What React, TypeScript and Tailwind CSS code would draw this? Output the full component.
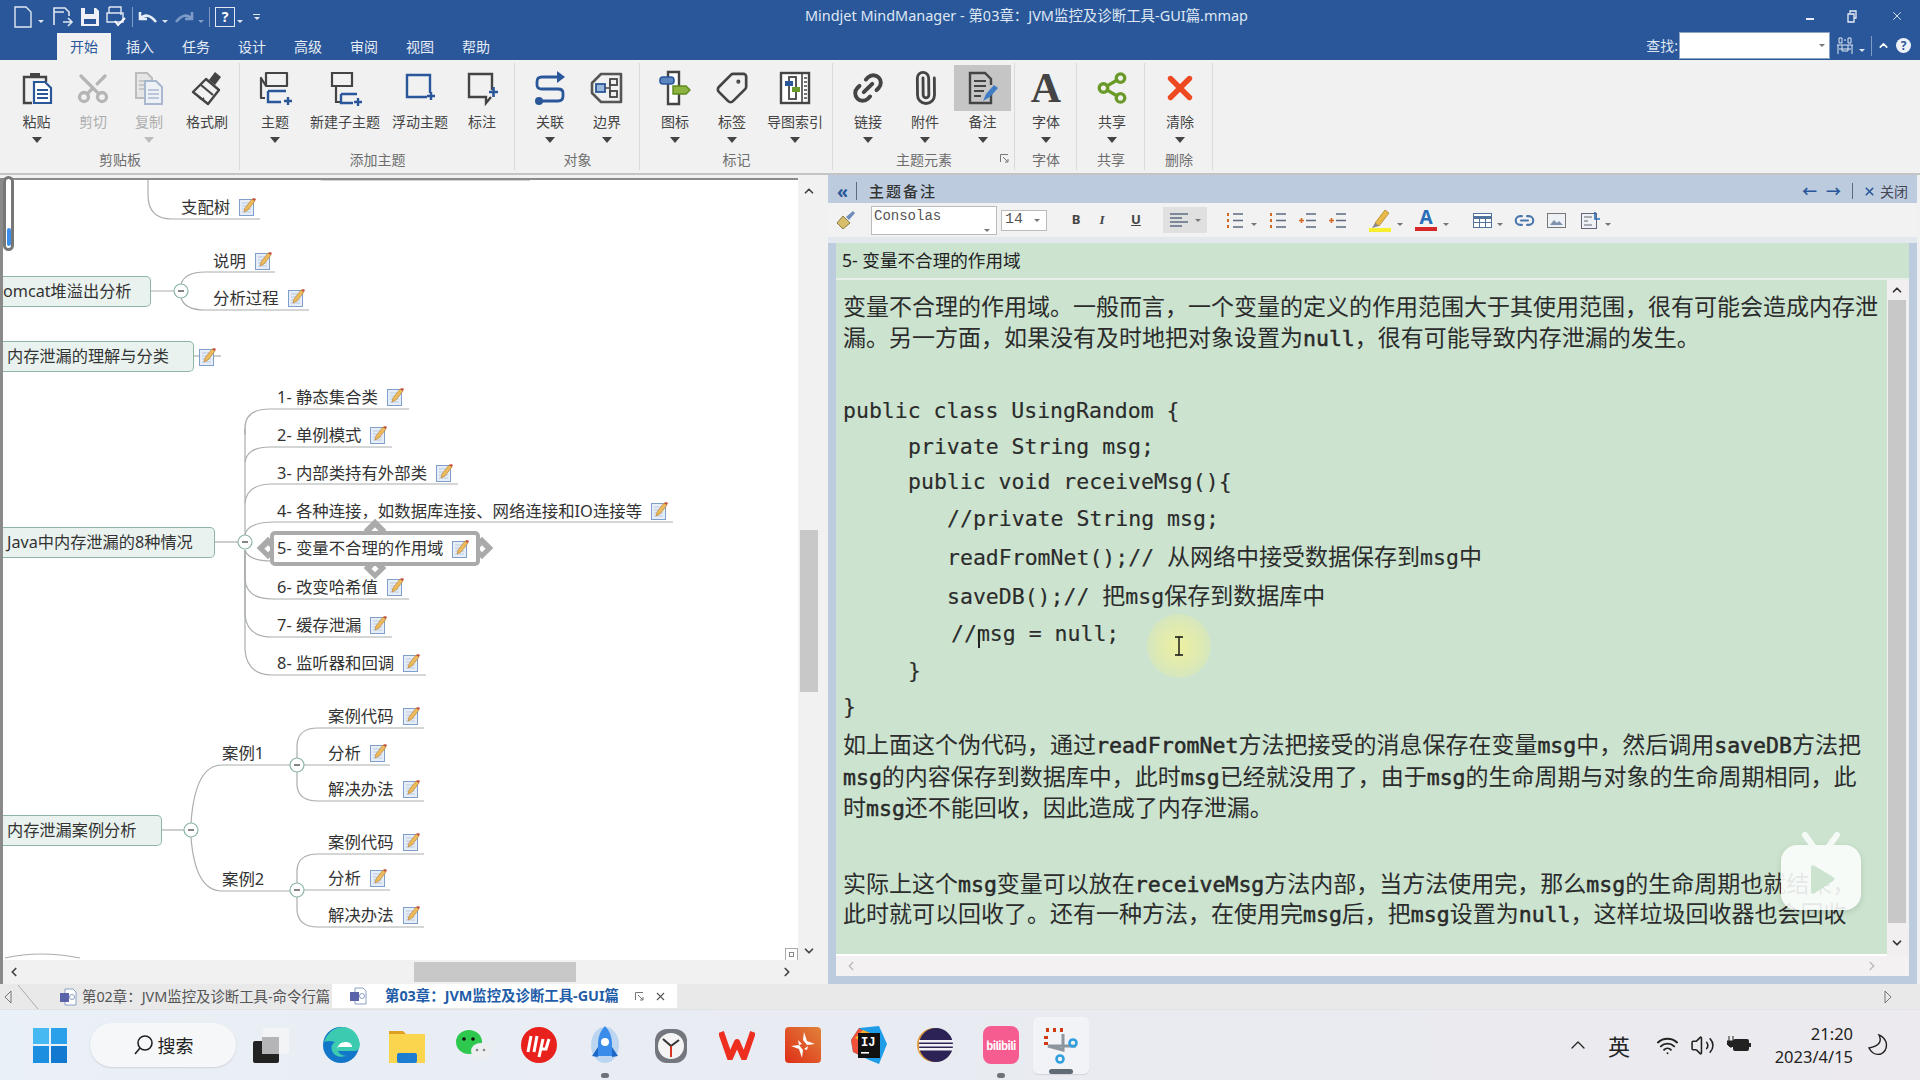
import { ChevronDown, ChevronLeft, ChevronRight, ChevronUp, Link2, Paperclip, Scissors, Share2, Tag, Volume2, Wifi, X } from "lucide-react";
import type { ReactNode } from "react";

const Caret = ({ dim = false }: { dim?: boolean }) => (
  <span className={`block w-0 h-0 border-x-[5.5px] border-x-transparent border-t-[6px] ${dim ? "border-t-[#bdbdbd]" : "border-t-[#444]"}`} />
);

const MiniCaret = ({ white = false }: { white?: boolean }) => (
  <span className={`inline-block w-0 h-0 border-x-[3px] border-x-transparent border-t-[3.5px] ${white ? "border-t-[#dfe7f2]" : "border-t-[#777]"}`} />
);

const Clipboard = () => (
  <svg width="34" height="36" viewBox="0 0 34 36" fill="none">
    <path d="M10 3h10v4H10z" fill="#444" />
    <path d="M12 33H4V7h22v5" stroke="#444" strokeWidth="2.4" />
    <path d="M14 12h11l6 6v15H14z" fill="#fff" stroke="#2a579a" strokeWidth="2.2" />
    <path d="M17 20h11M17 24h11M17 28h11" stroke="#2a579a" strokeWidth="1.8" />
  </svg>
);
const CopyDocs = () => (
  <svg width="34" height="36" viewBox="0 0 34 36" fill="none">
    <path d="M4 3h11l5 5v20H4z" fill="#e6e6e6" stroke="#bdbdbd" strokeWidth="2" />
    <path d="M7 11h9M7 15h9M7 19h9" stroke="#bdbdbd" strokeWidth="1.6" />
    <path d="M13 11h11l6 6v17H13z" fill="#eef1f6" stroke="#a9b8cf" strokeWidth="2" />
    <path d="M16 20h11M16 24h11M16 28h11" stroke="#a9b8cf" strokeWidth="1.6" />
  </svg>
);
const FormatBrush = () => (
  <svg width="34" height="36" viewBox="0 0 34 36" fill="none">
    <path d="M25 2l6 5-6 8-6-5z" fill="#444" />
    <path d="M16 9l13 11-11 14L3 22z" stroke="#444" strokeWidth="2.4" strokeLinejoin="round" />
    <path d="M11 15l12 10" stroke="#444" strokeWidth="2.2" />
    <path d="M8 26l3 3M12 30l2-2" stroke="#444" strokeWidth="1.8" />
  </svg>
);
const TopicIcon = () => (
  <svg width="34" height="36" viewBox="0 0 34 36" fill="none">
    <path d="M8 3h21v13H8zM8 16 3 8v20h4" stroke="#444" strokeWidth="2.2" strokeLinejoin="round" />
    <path d="M10 21h18M10 21v11h13" stroke="#2a579a" strokeWidth="2.4" />
    <path d="M26 31h8M30 27v8" stroke="#2a579a" strokeWidth="2.4" />
  </svg>
);
const SubTopicIcon = () => (
  <svg width="34" height="36" viewBox="0 0 34 36" fill="none">
    <path d="M4 3h20v13H4zM8 16v16h4" stroke="#444" strokeWidth="2.2" />
    <path d="M13 24h16M13 24v9h12" stroke="#2a579a" strokeWidth="2.4" />
    <path d="M26 32h8M30 28v8" stroke="#2a579a" strokeWidth="2.4" />
  </svg>
);
const FloatIcon = () => (
  <svg width="34" height="36" viewBox="0 0 34 36" fill="none">
    <path d="M27 23V5H4v22h20" stroke="#2a579a" strokeWidth="2.4" />
    <path d="M24 26h8M28 22v8" stroke="#2a579a" strokeWidth="2.4" />
  </svg>
);
const CalloutIcon = () => (
  <svg width="34" height="36" viewBox="0 0 34 36" fill="none">
    <path d="M27 20V4H4v23h17v6l5-6" stroke="#444" strokeWidth="2.4" />
    <path d="M24 22h9M28.5 17v10" stroke="#2a579a" strokeWidth="2.6" />
  </svg>
);
const RelationIcon = () => (
  <svg width="34" height="36" viewBox="0 0 34 36" fill="none">
    <path d="M28 7H9Q4 7 4 12v3q0 4 5 4h16q5 0 5 4v3q0 5-5 5H8" stroke="#2a579a" strokeWidth="2.8" />
    <path d="M24 1l8 6-8 6z" fill="#2a579a" />
    <circle cx="6" cy="31" r="4" fill="#2a579a" />
  </svg>
);
const BoundaryIcon = () => (
  <svg width="34" height="36" viewBox="0 0 34 36" fill="none">
    <path d="M11 4h20v28H11L2 23V13z" stroke="#555" strokeWidth="2.6" strokeLinejoin="round" />
    <rect x="6" y="14" width="9" height="8" fill="#9ab7da" stroke="#2a579a" strokeWidth="1.8" />
    <rect x="20" y="9" width="7" height="6" stroke="#444" strokeWidth="1.8" />
    <rect x="20" y="21" width="7" height="6" stroke="#444" strokeWidth="1.8" />
    <path d="M15 18h5M20 12v12" stroke="#444" strokeWidth="1.6" />
  </svg>
);
const MarkerIcon = () => (
  <svg width="34" height="36" viewBox="0 0 34 36" fill="none">
    <path d="M10 2h11v32H10z" fill="#fff" stroke="#444" strokeWidth="2.4" />
    <rect x="2" y="7" width="14" height="7" rx="3" fill="#5d86c0" stroke="#2a579a" strokeWidth="1.6" />
    <path d="M15 16h13l4 4-4 4H15z" fill="#8cb23f" stroke="#5e8a1f" strokeWidth="1.4" />
  </svg>
);
const MapIndexIcon = () => (
  <svg width="34" height="36" viewBox="0 0 34 36" fill="none">
    <rect x="3" y="3" width="28" height="30" fill="#fff" stroke="#444" strokeWidth="2.4" />
    <path d="M24 4v28" stroke="#444" strokeWidth="1.6" />
    <path d="M26 8h3M26 12h3M26 16h3M26 20h3M26 24h3M26 28h3" stroke="#444" strokeWidth="1.6" />
    <rect x="11" y="7" width="7" height="22" stroke="#444" strokeWidth="1.8" />
    <rect x="7" y="11" width="8" height="5" fill="#2a579a" />
    <path d="M14 17h8v5h-8z" fill="#6a9a2a" />
  </svg>
);
const NoteIcon = () => (
  <svg width="34" height="36" viewBox="0 0 34 36" fill="none">
    <path d="M25 24v9H4V3h15l6 6v6" stroke="#444" strokeWidth="2.4" />
    <path d="M8 11h12M8 16h12M8 21h10M8 26h7" stroke="#444" strokeWidth="2" />
    <path d="M17 31l3-7 8-9 4 3-8 9z" fill="#3f7cc4" />
  </svg>
);

type RibbonButton = { label: string; icon: ReactNode; w: string; caret?: boolean; dim?: boolean; active?: boolean };

const groups: { title: string; w: string; pad: string; items: RibbonButton[]; launcher?: boolean }[] = [
  {
    title: "剪贴板",
    w: "w-[240px]",
    pad: "pl-[8px]",
    items: [
      { label: "粘贴", icon: <Clipboard />, w: "w-[57px]", caret: true },
      { label: "剪切", icon: <Scissors size={36} strokeWidth={2.2} className="text-[#b5b5b5] -rotate-90" />, w: "w-[56px]", dim: true },
      { label: "复制", icon: <CopyDocs />, w: "w-[56px]", caret: true, dim: true },
      { label: "格式刷", icon: <FormatBrush />, w: "w-[60px]" },
    ],
  },
  {
    title: "添加主题",
    w: "w-[275px]",
    pad: "pl-[8px]",
    items: [
      { label: "主题", icon: <TopicIcon />, w: "w-[54px]", caret: true },
      { label: "新建子主题", icon: <SubTopicIcon />, w: "w-[86px]" },
      { label: "浮动主题", icon: <FloatIcon />, w: "w-[64px]" },
      { label: "标注", icon: <CalloutIcon />, w: "w-[60px]" },
    ],
  },
  {
    title: "对象",
    w: "w-[125px]",
    pad: "pl-[7px]",
    items: [
      { label: "关联", icon: <RelationIcon />, w: "w-[56px]", caret: true },
      { label: "边界", icon: <BoundaryIcon />, w: "w-[58px]", caret: true },
    ],
  },
  {
    title: "标记",
    w: "w-[193px]",
    pad: "pl-[7px]",
    items: [
      { label: "图标", icon: <MarkerIcon />, w: "w-[56px]", caret: true },
      { label: "标签", icon: <Tag size={34} strokeWidth={1.9} className="text-[#444] rotate-90" />, w: "w-[58px]", caret: true },
      { label: "导图索引", icon: <MapIndexIcon />, w: "w-[68px]", caret: true },
    ],
  },
  {
    title: "主题元素",
    w: "w-[182px]",
    pad: "pl-[7px]",
    launcher: true,
    items: [
      { label: "链接", icon: <Link2 size={36} strokeWidth={2.6} className="text-[#444] -rotate-45" />, w: "w-[56px]", caret: true },
      { label: "附件", icon: <Paperclip size={34} strokeWidth={2} className="text-[#444] -rotate-45" />, w: "w-[58px]", caret: true },
      { label: "备注", icon: <NoteIcon />, w: "w-[57px]", caret: true, active: true },
    ],
  },
  {
    title: "字体",
    w: "w-[62px]",
    pad: "pl-[3px]",
    items: [
      {
        label: "字体",
        icon: <span className="font-['Liberation_Serif',serif] font-bold text-[42px] leading-[36px] text-[#444]">A</span>,
        w: "w-[56px]",
        caret: true,
      },
    ],
  },
  {
    title: "共享",
    w: "w-[68px]",
    pad: "pl-[7px]",
    items: [{ label: "共享", icon: <Share2 size={34} strokeWidth={2.4} className="text-[#6a9a2a]" />, w: "w-[56px]", caret: true }],
  },
  {
    title: "删除",
    w: "w-[68px]",
    pad: "pl-[7px]",
    items: [{ label: "清除", icon: <X size={38} strokeWidth={3.4} className="text-[#ee4a22]" />, w: "w-[56px]", caret: true }],
  },
];

const tabs = ["插入", "任务", "设计", "高级", "审阅", "视图", "帮助"];

const TitleBar = () => (
  <header className="relative h-[60px] shrink-0 bg-[#2a579a] text-white">
    <div className="flex h-[33px] items-center pl-[14px]">
      <svg width="18" height="22" viewBox="0 0 18 22" fill="none"><path d="M1 1h11l5 5v15H1z" stroke="#dfe7f2" strokeWidth="1.4" /></svg>
      <span className="ml-[6px] mr-[9px]"><MiniCaret white /></span>
      <svg width="21" height="20" viewBox="0 0 21 20" fill="none"><path d="M1 18V1h11l4 4v4M1 5h10M10 15h9M15 11l4 4-4 4" stroke="#dfe7f2" strokeWidth="1.6" /></svg>
      <svg className="ml-[6px]" width="20" height="20" viewBox="0 0 20 20"><path d="M1 1h15l3 3v15H1z" fill="#eef2f8" /><path d="M5 1h9v6H5z" fill="#2a579a" /><path d="M4 12h12v5H4z" fill="#2a579a" /></svg>
      <svg className="ml-[6px]" width="21" height="21" viewBox="0 0 21 21" fill="none"><path d="M3 1h12v8M3 1v6M1 7h16v9H1z" stroke="#dfe7f2" strokeWidth="1.4" /><path d="M9 15l3 4 7-7" stroke="#fff" strokeWidth="2" /></svg>
      <span className="ml-[5px] mr-[5px] h-[20px] w-px bg-[#7f9cc6]" />
      <svg width="20" height="14" viewBox="0 0 20 14" fill="none"><path d="M2 2v7h7M2 9q7-8 16 3" stroke="#e8eef7" strokeWidth="2.6" /></svg>
      <span className="ml-[4px] mr-[6px]"><MiniCaret white /></span>
      <svg width="20" height="14" viewBox="0 0 20 14" fill="none"><path d="M18 2v7h-7M18 9Q11 1 2 12" stroke="#7d9bc6" strokeWidth="2.6" /></svg>
      <span className="ml-[4px] mr-[5px] opacity-50"><MiniCaret white /></span>
      <span className="mr-[5px] h-[20px] w-px bg-[#7f9cc6]" />
      <span className="flex h-[20px] w-[20px] items-center justify-center border border-[#dfe7f2] text-[14px] font-bold leading-none">?</span>
      <span className="ml-[2px]"><MiniCaret white /></span>
      <span className="ml-[10px] flex flex-col items-center gap-[2px]"><span className="h-px w-[7px] bg-[#dfe7f2]" /><MiniCaret white /></span>
    </div>
    <div className="flex h-[27px] pl-[57px] text-[14px] leading-[27px] text-[#e6edf6]">
      <span className="w-[54px] bg-[#f1f1f1] text-center text-[#2a579a]">开始</span>
      {tabs.map((t) => (
        <span key={t} className="ml-[2px] w-[54px] text-center">{t}</span>
      ))}
    </div>
    <div className="absolute left-[805px] top-[5px] whitespace-pre text-[14.45px] leading-[22px] text-[#dfe8f4]">Mindjet MindManager - 第03章：JVM监控及诊断工具-GUI篇.mmap</div>
    <div className="absolute right-[16px] top-[9px] flex items-center gap-[33px]">
      <span className="mt-[6px] h-[2px] w-[8px] bg-[#e8eef7]" />
      <svg width="10" height="13" viewBox="0 0 10 13" fill="none"><path d="M3 3V1h6v7H7M1 4h6v8H1z" stroke="#e8eef7" strokeWidth="1.3" /></svg>
      <X size={14} strokeWidth={1.5} className="text-[#e8eef7]" />
    </div>
    <div className="absolute right-0 top-[32px] flex h-[27px] items-center pr-[9px]">
      <span className="mr-px text-[14px] text-[#dce5f1]">查找:</span>
      <span className="mr-[6px] flex h-[27px] w-[151px] items-center justify-end border border-[#8ba4c8] bg-white pr-[4px]"><MiniCaret /></span>
      <svg width="18" height="18" viewBox="0 0 18 18" fill="none" stroke="#dfe7f2" strokeWidth="1"><path d="M3 1h3v5H3zM12 1h3v5h-3zM1 8h16M2 8v9M16 8v9M6 8v6h6V8M3 12h12M8 3h2" /></svg>
      <span className="ml-[5px]"><MiniCaret white /></span>
      <span className="ml-[6px] h-[20px] w-px bg-[#7f9cc6]" />
      <ChevronUp size={13} strokeWidth={3} className="ml-[5px] text-white" />
      <span className="ml-[6px] flex h-[15px] w-[15px] items-center justify-center rounded-full bg-[#eef2f8] text-[12px] font-bold leading-none text-[#2a579a]">?</span>
    </div>
  </header>
);

const Ribbon = () => (
  <div className="flex h-[115px] shrink-0 border-b-2 border-[#c4c4c4] bg-[#f1f1f1]">
    {groups.map((g) => (
      <section key={g.title} className={`relative ${g.w} shrink-0`}>
        <div className={`flex h-[89px] ${g.pad}`}>
          {g.items.map((b) => (
            <div key={b.label} className={`flex ${b.w} flex-col items-center pt-[5px]`}>
              <div className={`flex h-[46px] w-full items-center justify-center ${b.active ? "bg-[#c6c5c6]" : ""}`}>{b.icon}</div>
              <div className={`mt-px whitespace-nowrap text-[14px] leading-[20px] ${b.dim ? "text-[#aeaeae]" : "text-[#444]"}`}>{b.label}</div>
              {b.caret && <div className="mt-[5px]"><Caret dim={b.dim} /></div>}
            </div>
          ))}
        </div>
        <div className="text-center text-[14px] leading-[22px] text-[#6e6e6e]">{g.title}</div>
        {g.launcher && (
          <svg className="absolute bottom-[10px] right-[6px]" width="9" height="9" viewBox="0 0 9 9" fill="none" stroke="#777"><path d="M.5 8V.5H8M3 3l5 5M8 5v3H5" /></svg>
        )}
        <span className="absolute bottom-[3px] right-0 top-[3px] w-px bg-[#dadada]" />
      </section>
    ))}
    <div className="ml-auto" />
  </div>
);

const NoteMark = () => (
  <svg width="17" height="18" viewBox="0 0 17 18" className="shrink-0">
    <rect x="0.5" y="1.5" width="14" height="16" fill="#e7edf6" stroke="#7f9fcd" />
    <path d="M3 5h9M3 8h9M3 11h9M3 14h9" stroke="#b9c9e0" />
    <path d="M5 14l1-4 7-9 3 2-7 9z" fill="#edbb5e" stroke="#b27a25" strokeWidth="0.6" />
    <path d="M13 1l3 2 1-2-2-1z" fill="#c4503c" />
  </svg>
);

// Places on the free canvas of the map: offsets are counted from the canvas corner.
const topics: { text: string; pos: string }[] = [
  { text: "支配树", pos: "left-[181px] top-[20px]" },
  { text: "说明", pos: "left-[213px] top-[74px]" },
  { text: "分析过程", pos: "left-[213px] top-[111px]" },
  { text: "1- 静态集合类", pos: "left-[277px] top-[210px]" },
  { text: "2- 单例模式", pos: "left-[277px] top-[248px]" },
  { text: "3- 内部类持有外部类", pos: "left-[277px] top-[286px]" },
  { text: "4- 各种连接，如数据库连接、网络连接和IO连接等", pos: "left-[277px] top-[324px]" },
  { text: "6- 改变哈希值", pos: "left-[277px] top-[400px]" },
  { text: "7- 缓存泄漏", pos: "left-[277px] top-[438px]" },
  { text: "8- 监听器和回调", pos: "left-[277px] top-[476px]" },
  { text: "案例代码", pos: "left-[328px] top-[529px]" },
  { text: "分析", pos: "left-[328px] top-[566px]" },
  { text: "解决办法", pos: "left-[328px] top-[602px]" },
  { text: "案例代码", pos: "left-[328px] top-[655px]" },
  { text: "分析", pos: "left-[328px] top-[691px]" },
  { text: "解决办法", pos: "left-[328px] top-[728px]" },
];

const branches = [
  "M148 175V195Q148 219 172 219H260",
  "M310 175Q316 180 326 180H530",
  "M150 291H174M181 284Q185 272 205 272H275M181 298Q185 310 205 310H309",
  "M193 356H221",
  "M214 542H238",
  "M245 435V428Q245 409 270 409H409",
  "M245 462Q247 447 270 447H392",
  "M245 503Q247 484 272 484H458",
  "M245 535Q247 522 275 522H673",
  "M245 550Q248 561 272 561",
  "M245 550V580Q247 599 272 599H409",
  "M245 550V615Q247 637 272 637H392",
  "M245 550V650Q247 675 272 675H426",
  "M245 428V535",
  "M297 758V745Q298 728 318 728H424",
  "M304 765H390",
  "M297 772V785Q298 801 318 801H424",
  "M161 830H184",
  "M191 823Q195 765 222 765H290",
  "M191 837Q195 891 222 891H290",
  "M297 883V870Q298 854 318 854H424",
  "M304 890H390",
  "M297 897V910Q298 927 318 927H424",
  "M5 958Q40 950 80 958",
];

const circles = [[181, 291], [245, 542], [297, 765], [191, 830], [297, 890]];

const Root = ({ pos, children }: { pos: string; children: string }) => (
  <div className={`absolute ${pos} flex h-[31px] items-center overflow-hidden whitespace-pre rounded-r-[5px] border border-l-0 border-[#8db5a4] bg-[#e9f2ee] text-[16.2px] text-[#333]`}>{children}</div>
);

const Handle = ({ pos }: { pos: string }) => (
  <span className={`absolute ${pos} flex h-[16px] w-[16px] rotate-45 items-center justify-center bg-[#aaa]`}>
    <span className="h-[5px] w-[5px] bg-white" />
  </span>
);

const MindMap = () => (
  <div className="relative flex-1 overflow-hidden border-l-[3px] border-t-2 border-[#8a8a8a] bg-white">
    <div className="absolute -left-[3px] -top-[5px] h-[785px] w-[798px]">
      <svg className="absolute inset-0" width="798" height="785" viewBox="0 175 798 785" fill="none" stroke="#a9aeab" strokeWidth="1.2">
        {branches.map((d) => <path key={d} d={d} />)}
        {circles.map(([x, y]) => (
          <g key={`${x}-${y}`}>
            <circle cx={x} cy={y} r="7" fill="#fff" stroke="#8db5a4" />
            <path d={`M${x - 3} ${y}h6`} stroke="#333" />
          </g>
        ))}
      </svg>
      {topics.map((t) => (
        <div key={t.pos} className={`absolute ${t.pos} flex h-[24px] items-center gap-[9px] whitespace-pre text-[16.4px] text-[#333]`}>
          {t.text}
          <NoteMark />
        </div>
      ))}
      <div className="absolute left-[222px] top-[566px] flex h-[24px] items-center text-[16.4px] text-[#333]">案例1</div>
      <div className="absolute left-[222px] top-[692px] flex h-[24px] items-center text-[16.4px] text-[#333]">案例2</div>
      <Root pos="left-[3px] top-[101px] w-[148px]">omcat堆溢出分析</Root>
      <Root pos="left-[3px] top-[166px] w-[191px] pl-[4px]">内存泄漏的理解与分类</Root>
      <Root pos="left-[3px] top-[352px] w-[212px] pl-[4px]">Java中内存泄漏的8种情况</Root>
      <Root pos="left-[3px] top-[640px] w-[159px] pl-[4px]">内存泄漏案例分析</Root>
      <div className="absolute left-[199px] top-[173px]"><NoteMark /></div>
      <Handle pos="left-[367px] top-[347px]" />
      <Handle pos="left-[367px] top-[385px]" />
      <Handle pos="left-[260px] top-[365px]" />
      <Handle pos="left-[474px] top-[365px]" />
      <div className="absolute left-[270px] top-[356px] flex h-[35px] w-[210px] items-center gap-[9px] whitespace-pre rounded-[5px] border-[4px] border-[#aaa] bg-white pl-[3px] text-[16.4px] text-[#333]">
        5- 变量不合理的作用域
        <NoteMark />
      </div>
      <div className="absolute left-[785px] top-[773px] flex h-[13px] w-[13px] items-center justify-center border border-[#aaa]"><span className="h-[5px] w-[5px] border border-[#888]" /></div>
    </div>
  </div>
);

const LeftPane = () => (
  <div className="relative flex w-[820px] shrink-0 flex-col bg-[#f1f1f1] pt-[3px]">
    <div className="flex h-[782px]">
      <MindMap />
      <div className="flex w-[22px] shrink-0 flex-col items-center bg-[#f1f1f1] pt-[6px]">
        <ChevronUp size={14} strokeWidth={3} className="text-[#444]" />
        <div className="mt-[332px] h-[162px] w-[18px] bg-[#c8c8c8]" />
        <ChevronDown size={14} strokeWidth={3} className="mt-[252px] text-[#444]" />
      </div>
    </div>
    <div className="flex h-[24px] items-center border-l-[3px] border-[#8a8a8a] pl-[4px]">
      <ChevronLeft size={14} strokeWidth={3} className="text-[#444]" />
      <div className="ml-[393px] h-[20px] w-[162px] bg-[#c8c8c8]" />
      <ChevronRight size={14} strokeWidth={3} className="ml-[204px] text-[#444]" />
    </div>
    {/* pen tool of the recording, lies over the map */}
    <div className="absolute left-[3px] top-[1px] flex h-[75px] w-[11px] items-end rounded-[6px] border-[3px] border-[#777] bg-white pb-[2px]">
      <span className="mx-auto h-[18px] w-[4px] rounded-full bg-[#3d8fee]" />
    </div>
  </div>
);

const Sep = () => <span className="h-[27px] w-px bg-[#d6d6d6]" />;

const ListIcon = ({ accent, plus }: { accent: string; plus?: boolean }) => (
  <svg width="18" height="17" viewBox="0 0 18 17" fill="none">
    <path d="M7 2h10M7 8.5h10M7 15h10" stroke="#5c6b80" strokeWidth="1.6" />
    {plus ? <path d="M0 8.5h5M2.5 6v5" stroke={accent} strokeWidth="1.6" /> : <path d="M2 1v3M2 7v3M2 13v3" stroke={accent} strokeWidth="2" />}
  </svg>
);

const NoteToolbar = () => (
  <div className="flex h-[34px] shrink-0 items-center bg-[#f2f2f2] pl-[8px] text-[#444]">
    <svg width="20" height="20" viewBox="0 0 20 20"><path d="M1 13l6-7 7 7-7 6z" fill="#d8bd6a" stroke="#8a7b45" /><path d="M10 7l7-6 2 2-6 7z" fill="#6d8cbb" /></svg>
    <span className="ml-[15px]"><Sep /></span>
    <div className="flex h-[29px] w-[126px] justify-between border border-[#bbb] bg-white pl-[2px] pr-[6px] font-['Liberation_Mono',monospace] text-[14px] leading-[18px] text-[#555]">
      Consolas
      <span className="mt-[12px]"><MiniCaret /></span>
    </div>
    <div className="ml-[4px] flex h-[21px] w-[46px] items-center justify-between border border-[#bbb] bg-white px-[3px] pr-[6px] font-['Liberation_Mono',monospace] text-[15px] text-[#555]">
      14
      <MiniCaret />
    </div>
    <span className="ml-[7px]"><Sep /></span>
    <b className="ml-[17px] w-[10px] text-center text-[13px]">B</b>
    <i className="ml-[16px] w-[10px] text-center font-['Liberation_Serif',serif] text-[13px] font-bold">I</i>
    <u className="ml-[24px] w-[10px] text-center text-[13px] font-bold">U</u>
    <span className="ml-[17px]"><Sep /></span>
    <div className="ml-[5px] flex h-[26px] w-[44px] items-center gap-[5px] bg-[#e0e0e0] pl-[7px]">
      <svg width="20" height="14" viewBox="0 0 20 14" fill="none"><path d="M0 1h18M0 5h12M0 9h18M0 13h12" stroke="#5c6b80" strokeWidth="1.6" /></svg>
      <MiniCaret />
    </div>
    <span className="ml-[6px]"><Sep /></span>
    <span className="ml-[13px]"><ListIcon accent="#d2691e" /></span>
    <span className="ml-[7px]"><MiniCaret /></span>
    <span className="ml-[12px]"><ListIcon accent="#d2691e" /></span>
    <span className="ml-[12px]"><ListIcon accent="#d2691e" plus /></span>
    <span className="ml-[12px]"><ListIcon accent="#d2691e" plus /></span>
    <span className="ml-[12px]"><Sep /></span>
    <svg className="ml-[10px]" width="22" height="24" viewBox="0 0 22 24"><path d="M6 15L16 2l4 3-10 13z" fill="#e9b94a" stroke="#a37c1e" strokeWidth="0.7" /><path d="M3 20l3-5 4 3z" fill="#888" /><rect y="20" width="22" height="4" fill="#f6ee2f" /></svg>
    <span className="ml-[6px]"><MiniCaret /></span>
    <span className="relative ml-[12px] flex h-[24px] w-[22px] flex-col items-center font-bold leading-none text-[#2a6fb8]">
      <span className="text-[19px] leading-[19px]">A</span>
      <span className="h-[4px] w-[22px] bg-[#d62828]" />
    </span>
    <span className="ml-[6px]"><MiniCaret /></span>
    <span className="ml-[16px]"><Sep /></span>
    <svg className="ml-[8px]" width="19" height="15" viewBox="0 0 19 15" fill="none"><rect x=".5" y=".5" width="18" height="14" fill="#fff" stroke="#54739c" /><path d="M.5 4.5h18" stroke="#54739c" strokeWidth="3" /><path d="M6.5 5v10M12.5 5v10M1 9.5h17" stroke="#54739c" /></svg>
    <span className="ml-[5px]"><MiniCaret /></span>
    <Link2 size={21} strokeWidth={2.4} className="ml-[11px] text-[#4a76ad]" />
    <svg className="ml-[12px]" width="19" height="15" viewBox="0 0 19 15"><rect x=".5" y=".5" width="18" height="14" fill="#eef1f5" stroke="#777" /><path d="M3 12l4-5 3 3 2-2 4 4z" fill="#7d93ad" /></svg>
    <svg className="ml-[15px]" width="20" height="18" viewBox="0 0 20 18" fill="none"><rect x=".5" y="2.5" width="15" height="15" fill="#eef1f5" stroke="#667" /><path d="M3 6h8M3 10h4M3 14h8" stroke="#667" /><path d="M14 1v7h5" stroke="#2a6fb8" strokeWidth="1.6" /></svg>
    <span className="ml-[4px]"><MiniCaret /></span>
  </div>
);

const Mono = ({ children, bold }: { children: string; bold?: boolean }) => (
  <span className={`font-['DejaVu_Sans_Mono',monospace] text-[21.5px] ${bold ? "[-webkit-text-stroke:0.5px_#222]" : "[-webkit-text-stroke:0.15px_#222]"}`}>{children}</span>
);

const Row = ({ text, cls, bold }: { text: string; cls: string; bold?: boolean }) => (
  <div className={`h-[30px] whitespace-pre text-[23px] leading-[30px] text-[#2c2c2c] ${cls}`}>
    {text.split(/([\x20-\x7e]+)/).map((run, i) =>
      i % 2 ? <Mono key={i} bold={bold}>{run}</Mono> : <span key={i}>{run}</span>
    )}
  </div>
);

const noteLines: { text: string; cls: string; bold?: boolean }[] = [
  { text: "变量不合理的作用域。一般而言，一个变量的定义的作用范围大于其使用范围，很有可能会造成内存泄", cls: "", bold: true },
  { text: "漏。另一方面，如果没有及时地把对象设置为null，很有可能导致内存泄漏的发生。", cls: "mt-px", bold: true },
  { text: "public class UsingRandom {", cls: "mt-[42px]" },
  { text: "private String msg;", cls: "mt-[6px] pl-[65px]" },
  { text: "public void receiveMsg(){", cls: "mt-[5px] pl-[65px]" },
  { text: "//private String msg;", cls: "mt-[7px] pl-[104px]" },
  { text: "readFromNet();// 从网络中接受数据保存到msg中", cls: "mt-[9px] pl-[104px]" },
  { text: "saveDB();// 把msg保存到数据库中", cls: "mt-[9px] pl-[104px]" },
  { text: "//msg = null;", cls: "mt-[7px] pl-[108px]" },
  { text: "}", cls: "mt-[7px] pl-[65px]" },
  { text: "}", cls: "mt-[6px]" },
  { text: "如上面这个伪代码，通过readFromNet方法把接受的消息保存在变量msg中，然后调用saveDB方法把", cls: "mt-[9px]", bold: true },
  { text: "msg的内容保存到数据库中，此时msg已经就没用了，由于msg的生命周期与对象的生命周期相同，此", cls: "mt-[2px]", bold: true },
  { text: "时msg还不能回收，因此造成了内存泄漏。", cls: "mt-px", bold: true },
  { text: "实际上这个msg变量可以放在receiveMsg方法内部，当方法使用完，那么msg的生命周期也就结束，", cls: "mt-[46px]", bold: true },
  { text: "此时就可以回收了。还有一种方法，在使用完msg后，把msg设置为null，这样垃圾回收器也会回收", cls: "", bold: true },
];

const RightPane = () => (
  <div className="ml-[8px] flex w-[1089px] shrink-0 flex-col bg-[#bccbdd] pt-[4px] pb-[8px] pl-[8px] pr-[8px] -mb-0">
    <div className="-ml-[8px] -mr-[8px] flex h-[24px] shrink-0 items-center text-[#333]">
      <span className="ml-[9px] w-[12px] text-[18px] font-bold leading-none text-[#2a579a]">«</span>
      <span className="ml-[7px] h-[18px] w-px bg-[#5a6a80]" />
      <span className="ml-[12px] font-['Noto_Sans_CJK_SC',sans-serif] text-[15px] font-medium tracking-[2px]">主题备注</span>
      <span className="ml-auto text-[15px] font-bold leading-none text-[#2a579a]">←</span>
      <span className="ml-[9px] text-[15px] font-bold leading-none text-[#2a579a]">→</span>
      <span className="ml-[11px] h-[16px] w-px bg-[#5a6a80]" />
      <X size={13} strokeWidth={3} className="ml-[10px] text-[#2a579a]" />
      <span className="ml-[4px] mr-[9px] text-[14px] text-[#445]">关闭</span>
    </div>
    <div className="-ml-[8px] -mr-[8px]"><NoteToolbar /></div>
    <div className="h-[6px] shrink-0 -mx-[8px] bg-[#e3e7ee]" />
    <div className="flex h-[35px] shrink-0 items-center whitespace-pre bg-[#cbe3cf] pl-[6px] text-[17.6px] text-[#222]">5- 变量不合理的作用域</div>
    <div className="h-[2px] shrink-0 bg-[#e8efe8]" />
    <div className="flex min-h-0 flex-1 bg-[#f1efef]">
      <div className="relative w-[1051px] overflow-hidden border-b-2 border-white bg-[#cbe3cf] pl-[7px] pt-[11px]">
        {noteLines.map((l) => <Row key={l.text + l.cls} {...l} />)}
        {/* text caret and the recording's pointer glow */}
        <span className="absolute left-[142px] top-[350px] h-[18px] w-[1.5px] bg-[#222]" />
        <span className="absolute left-[311px] top-[334px] h-[64px] w-[64px] rounded-full bg-[radial-gradient(circle,#eef0a0_0%,#e4ecaacc_45%,#cbe3cf00_100%)]" />
        <svg className="absolute left-[338px] top-[356px]" width="10" height="20" viewBox="0 0 10 20" fill="none" stroke="#111" strokeWidth="1.4"><path d="M1 1h8M5 1v18M1 19h8" /></svg>
      </div>
      <div className="flex w-[20px] flex-col items-center pt-[3px]">
        <ChevronUp size={14} strokeWidth={3} className="text-[#333]" />
        <div className="mt-[3px] h-[623px] w-[18px] bg-[#c8c8c8]" />
        <ChevronDown size={14} strokeWidth={3} className="mt-[13px] text-[#333]" />
      </div>
    </div>
    <div className="flex h-[20px] shrink-0 items-center justify-between bg-[#f3f1f1] pl-[8px] pr-[30px] text-[#bbb]">
      <ChevronLeft size={14} strokeWidth={2.5} />
      <ChevronRight size={14} strokeWidth={2.5} />
    </div>
  </div>
);

const PlayBadge = () => (
  <div className="absolute left-[1781px] top-[845px] h-[65px] w-[80px] rounded-[16px] bg-[#fbfdfc]/90 shadow-[0_2px_6px_rgba(0,0,0,0.12)]">
    <svg className="absolute -top-[14px] left-[18px]" width="44" height="16" viewBox="0 0 44 16" stroke="#f6faf7" strokeWidth="6" strokeLinecap="round"><path d="M6 4l8 11M38 4l-8 11" /></svg>
    <svg className="absolute left-[27px] top-[18px]" width="30" height="32" viewBox="0 0 30 32"><path d="M3 5q0-4 4-2l18 11q3 2 0 4L7 30q-4 2-4-2z" fill="#cbe3cf" /></svg>
  </div>
);

const DocMark = () => (
  <svg width="18" height="18" viewBox="0 0 18 18"><path d="M6 1h8l3 3v13H6z" fill="#fff" stroke="#8a9fc2" /><rect x="1" y="5" width="9" height="9" fill="#5a62a8" /><circle cx="13" cy="9" r="2.5" fill="none" stroke="#8a9fc2" /></svg>
);

const TabStrip = () => (
  <div className="flex h-[25px] shrink-0 items-center bg-[#e9e9ea] text-[14.4px]">
    <svg className="ml-[4px]" width="8" height="14" viewBox="0 0 8 14" fill="none" stroke="#777"><path d="M7 1 1 7l6 6z" /></svg>
    <svg className="ml-[5px]" width="22" height="24" viewBox="0 0 22 24" fill="none" stroke="#aaa"><path d="M1 0l20 24" /></svg>
    <span className="ml-[20px]"><DocMark /></span>
    <span className="ml-[5px] w-[250px] whitespace-pre text-[#555]">第02章：JVM监控及诊断工具-命令行篇</span>
    <div className="flex h-[24px] w-[345px] items-center self-start bg-white pl-[17px]">
      <DocMark />
      <span className="ml-[18px] w-[242px] whitespace-pre font-bold text-[#1f5da8]">第03章：JVM监控及诊断工具-GUI篇</span>
      <svg className="ml-[8px]" width="9" height="9" viewBox="0 0 9 9" fill="none" stroke="#777"><path d="M.5 8V.5H8M3 3l5 5M8 5v3H5" /></svg>
      <X size={13} className="ml-[10px] text-[#555]" />
    </div>
    <svg className="ml-auto mr-[28px]" width="8" height="14" viewBox="0 0 8 14" fill="none" stroke="#777"><path d="M1 1l6 6-6 6z" /></svg>
  </div>
);

const apps: { name: string; icon: ReactNode; dot?: boolean }[] = [
  {
    name: "edge",
    icon: (
      <svg width="37" height="37" viewBox="0 0 37 37">
        <circle cx="18" cy="18" r="18" fill="#1277c9" />
        <path d="M1 15Q6 1 20 0q14 1 17 17 0 8-8 7H15q1 4 8 5-10 3-14-5-2-6 3-9-6-2-11 0" fill="#3ccbb0" />
        <path d="M14 22q2-8 10-7 5 1 5 5H14z" fill="#fff" />
      </svg>
    ),
  },
  {
    name: "folder",
    icon: (
      <svg width="36" height="35" viewBox="0 0 36 35">
        <path d="M0 3h14l4 4H0z" fill="#dfa11f" />
        <rect y="6" width="36" height="29" fill="#fbd54e" />
        <rect x="8" y="25" width="20" height="10" rx="2" fill="#1d7dd1" />
      </svg>
    ),
  },
  {
    name: "wechat",
    icon: (
      <svg width="36" height="32" viewBox="0 0 36 32">
        <ellipse cx="14" cy="13" rx="13" ry="12" fill="#2dc84d" />
        <circle cx="9" cy="10" r="1.8" fill="#111" /><circle cx="18" cy="10" r="1.8" fill="#111" />
        <ellipse cx="26" cy="22" rx="10" ry="8" fill="#eceeef" />
        <circle cx="22" cy="21" r="1.3" fill="#888" /><circle cx="29" cy="21" r="1.3" fill="#888" />
      </svg>
    ),
  },
  {
    name: "red",
    icon: (
      <svg width="36" height="36" viewBox="0 0 36 36" stroke="#fff" strokeWidth="3" fill="none">
        <circle cx="18" cy="18" r="18" fill="#e8211d" stroke="none" />
        <path d="M10 9 7 25M16 9l-3 16M22 12l-4 18M28 12l-3 10h-4" />
      </svg>
    ),
  },
  {
    name: "rocket",
    dot: true,
    icon: (
      <svg width="32" height="40" viewBox="0 0 32 40">
        <ellipse cx="16" cy="20" rx="14" ry="18" fill="#bcd5f0" />
        <path d="M16 1q7 7 7 18v12H9V19Q9 8 16 1z" fill="#3a8cea" />
        <path d="M9 22l-6 9 6 1zM23 22l6 9-6 1z" fill="#1d67c7" />
        <circle cx="16" cy="17" r="4" fill="#fff" />
      </svg>
    ),
  },
  {
    name: "clock",
    icon: (
      <svg width="36" height="38" viewBox="0 0 36 38" fill="none">
        <rect x="2" y="3" width="32" height="34" rx="12" fill="#73777d" />
        <circle cx="18" cy="20" r="13" fill="#f4f4f4" />
        <path d="M18 20 10 13M18 20l8-6" stroke="#333" strokeWidth="2" />
        <path d="M18 20v11" stroke="#d9331f" strokeWidth="2" />
      </svg>
    ),
  },
  {
    name: "wps",
    icon: (
      <svg width="36" height="30" viewBox="0 0 36 30" fill="none" strokeLinejoin="round">
        <path d="M2 2l9 26 7-16 7 16 9-26" stroke="#ee2e1f" strokeWidth="6" />
      </svg>
    ),
  },
  {
    name: "xmind",
    icon: (
      <svg width="36" height="36" viewBox="0 0 36 36">
        <defs><linearGradient id="xm" x1="0" y1="1" x2="1" y2="0"><stop stopColor="#df2d17" /><stop offset="1" stopColor="#e08339" /></linearGradient></defs>
        <rect width="36" height="36" rx="4" fill="url(#xm)" />
        <path d="M19 5l3 9 8 3-8 1-4-5zM17 31l-3-9-8-3 8-1 4 5zM13 13l4 4-3 1zM23 19l-4 3 3 1z" fill="#fff" />
      </svg>
    ),
  },
  {
    name: "idea",
    icon: (
      <svg width="36" height="38" viewBox="0 0 36 38">
        <path d="M8 2 28 0l8 18-8 20-10-4L2 26 0 14z" fill="#1e9ce8" />
        <path d="M0 14 8 2l8 6-6 22-8-4z" fill="#f1503a" />
        <path d="M4 12l8-8 10 4-8 10z" fill="#f5b029" />
        <rect x="7" y="7" width="22" height="25" fill="#111" />
        <text x="10" y="20" fontSize="12" fontWeight="700" fontFamily="Liberation Mono" fill="#fff">IJ</text>
        <rect x="10" y="26" width="8" height="1.6" fill="#fff" />
      </svg>
    ),
  },
  {
    name: "eclipse",
    icon: (
      <svg width="36" height="36" viewBox="0 0 36 36">
        <circle cx="17" cy="18" r="17" fill="#e09a3d" />
        <circle cx="19" cy="18" r="17" fill="#2c2255" />
        <path d="M2 13h34v2.4H2zM2 17h34v2.4H2zM2 21h34v2.4H2z" fill="#f2f2f6" />
      </svg>
    ),
  },
  {
    name: "bili",
    dot: true,
    icon: (
      <div className="flex h-[38px] w-[36px] items-center justify-center rounded-[8px] bg-[#f65c8f] text-[11px] font-bold tracking-[-0.6px] text-white">bilibili</div>
    ),
  },
];

const TaskBar = () => (
  <footer className="flex h-[71px] shrink-0 items-center border-t border-[#e0e2e6] bg-gradient-to-r from-[#eaf0f7] via-[#e8ebf1] to-[#eceaee] font-['Noto_Sans_CJK_SC',sans-serif]">
    <div className="ml-[33px] grid h-[35px] w-[34px] grid-cols-2 gap-[1.5px]">
      <span className="bg-[#46b9f2]" /><span className="bg-[#2aa0ea]" /><span className="bg-[#1d8fe0]" /><span className="bg-[#1179cf]" />
    </div>
    <div className="ml-[23px] flex h-[44px] w-[146px] items-center justify-center gap-[5px] rounded-[22px] bg-[#f6f7f9] shadow-[0_1px_2px_rgba(0,0,0,0.12)]">
      <svg width="20" height="22" viewBox="0 0 20 22" fill="none" stroke="#222" strokeWidth="1.6"><circle cx="12" cy="9" r="7" /><path d="M7 14l-5 6" /></svg>
      <span className="text-[18px] text-[#222]">搜索</span>
    </div>
    <div className="ml-[2px] flex w-[70px] justify-center pr-[4px]">
      <div className="relative h-[35px] w-[36px]">
        <span className="absolute bottom-0 left-0 h-[22px] w-[26px] rounded-[2px] bg-[#222]" />
        <span className="absolute right-0 top-0 h-[26px] w-[26px] rounded-[2px] bg-[#f4f4f6]/90" />
        <span className="absolute bottom-[9px] left-[9px] h-[17px] w-[17px] bg-[#b5b5b7]" />
      </div>
    </div>
    {apps.map((a) => (
      <div key={a.name} className="relative flex h-[66px] w-[66px] items-center justify-center">
        {a.icon}
        {a.dot && <span className="absolute bottom-0 h-[5px] w-[8px] rounded-full bg-[#6e7279]" />}
      </div>
    ))}
    <div className="relative flex h-[57px] w-[56px] -ml-[1px] items-center justify-center rounded-[5px] bg-[#f2f3f6] shadow-[0_1px_1px_rgba(0,0,0,0.1)]">
      <svg width="36" height="38" viewBox="0 0 36 38" fill="none">
        <path d="M3 4h3M10 4h3M17 4h3M3 10v3M3 16v3" stroke="#d23a12" strokeWidth="4" />
        <path d="M20 8v16l-15-4h28" stroke="#8d959e" strokeWidth="3" />
        <circle cx="30" cy="17" r="3.5" stroke="#2f9fe0" strokeWidth="2.6" />
        <circle cx="17" cy="33" r="3.5" stroke="#2f9fe0" strokeWidth="2.6" />
      </svg>
      <span className="absolute bottom-0 h-[5px] w-[24px] rounded-full bg-[#5f6a75]" />
    </div>
    <ChevronUp size={24} strokeWidth={1.3} className="ml-[477px] text-[#222]" />
    <span className="ml-[18px] text-[22px] text-[#222]">英</span>
    <Wifi size={23} strokeWidth={2} className="ml-[26px] text-[#222]" />
    <Volume2 size={25} strokeWidth={1.5} className="ml-[11px] text-[#222]" />
    <svg className="ml-[12px]" width="24" height="18" viewBox="0 0 24 18"><rect x="6" y="3" width="16" height="12" rx="2" fill="#222" /><rect x="22" y="7" width="2" height="4" fill="#222" /><path d="M2 0v5M6 0v5M0 5h8v3l-3 3H3L0 8z" fill="#222" stroke="#222" /></svg>
    <div className="ml-[2px] w-[100px] text-right font-['Noto_Sans',sans-serif] text-[16.5px] leading-[23px] text-[#222]">
      <div>21:20</div>
      <div>2023/4/15</div>
    </div>
    <svg className="ml-[15px]" width="20" height="22" viewBox="0 0 20 22" fill="none" stroke="#222" strokeWidth="1.4"><path d="M11 1q5 10-10 13 4 8 12 6 7-4 5-12-2-5-7-7z" /></svg>
  </footer>
);

export default function App() {
  return (
    <div className="flex h-[1080px] w-[1920px] flex-col overflow-hidden bg-[#f1f1f1] font-['Noto_Sans','Noto_Sans_CJK_SC',sans-serif]">
      <TitleBar />
      <Ribbon />
      <main className="relative flex h-[809px] shrink-0">
        <LeftPane />
        <RightPane />
        <div className="absolute inset-0 -top-[175px] pointer-events-none"><PlayBadge /></div>
      </main>
      <TabStrip />
      <TaskBar />
    </div>
  );
}
